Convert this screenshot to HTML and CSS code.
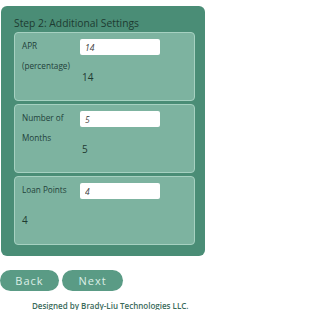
FILE: index.html
```html
<!DOCTYPE html>
<html>
<head>
<meta charset="utf-8">
<link rel="stylesheet" href="styles.css">
</head>
<body>
<div class="panel">
  <div class="title">Step 2: Additional Settings</div>
  <div class="card">
    <div class="label tall">APR<br>(percentage)</div>
    <input class="field" type="text" value="14">
    <div class="value">14</div>
  </div>
  <div class="card">
    <div class="label tall">Number of<br>Months</div>
    <input class="field" type="text" value="5">
    <div class="value">5</div>
  </div>
  <div class="card">
    <div class="label">Loan Points</div>
    <input class="field" type="text" value="4">
    <div class="value full">4</div>
  </div>
</div>
<div class="buttons">
  <button class="btn back">Back</button>
  <button class="btn next">Next</button>
</div>
<div class="footer">Designed by Brady-Liu Technologies LLC.</div>
</body>
</html>
```
FILE: styles.css
```css
html, body {
  margin: 0;
  padding: 0;
  background: #ffffff;
}
body {
  font-family: "Open Sans", "Noto Sans", sans-serif;
  width: 207px;
  height: 310px;
  overflow: hidden;
}
.panel {
  margin: 6px 2px 0 1px;
  height: 250px;
  box-sizing: border-box;
  background: #4a8d76;
  border-radius: 6px;
  padding: 10px 10px 0 13px;
}
.title {
  font-size: 10.3px;
  line-height: 14px;
  color: #1d3b31;
  margin-bottom: 2px;
  white-space: nowrap;
}
.card {
  height: 69px;
  box-sizing: border-box;
  background: #7db3a0;
  border: 1px solid #a6d1c1;
  border-radius: 4px;
  padding: 3px 8px 0 7px;
  margin-bottom: 3px;
  display: grid;
  grid-template-columns: 58px 80px;
  grid-template-rows: auto auto;
  align-content: start;
}
.label {
  grid-column: 1;
  grid-row: 1;
  font-size: 8.2px;
  line-height: 20px;
  color: #22413a;
  white-space: nowrap;
}
.label.tall {
  grid-row: 1 / 3;
}
.field {
  grid-column: 2;
  grid-row: 1;
  margin: 3px 0 0 0;
  width: 80px;
  height: 16px;
  box-sizing: border-box;
  border: none;
  border-radius: 2px;
  background: #ffffff;
  padding: 0 0 0 5px;
  font-family: "Open Sans", "Noto Sans", sans-serif;
  font-size: 8.5px;
  font-style: italic;
  color: #3a3a3a;
  outline: none;
}
.value {
  grid-column: 2;
  grid-row: 2;
  margin-top: 15px;
  padding-left: 2px;
  font-size: 10px;
  line-height: 14px;
  color: #1f3a31;
  align-self: start;
}
.value.full {
  grid-column: 1 / 3;
  margin-top: 13px;
  padding-left: 0;
}
.buttons {
  display: flex;
  gap: 3px;
  margin-top: 14px;
}
.btn {
  height: 21px;
  border: none;
  border-radius: 11px;
  background: #5a9b85;
  color: #dcefe7;
  font-family: "Open Sans", "Noto Sans", sans-serif;
  font-size: 11px;
  letter-spacing: 1px;
  padding: 0;
  line-height: 21px;
}
.back { width: 59px; }
.next { width: 61px; }
.footer {
  margin-top: 9px;
  padding-left: 32px;
  font-size: 8px;
  font-weight: 600;
  color: #3a6a5a;
  white-space: nowrap;
}
```
